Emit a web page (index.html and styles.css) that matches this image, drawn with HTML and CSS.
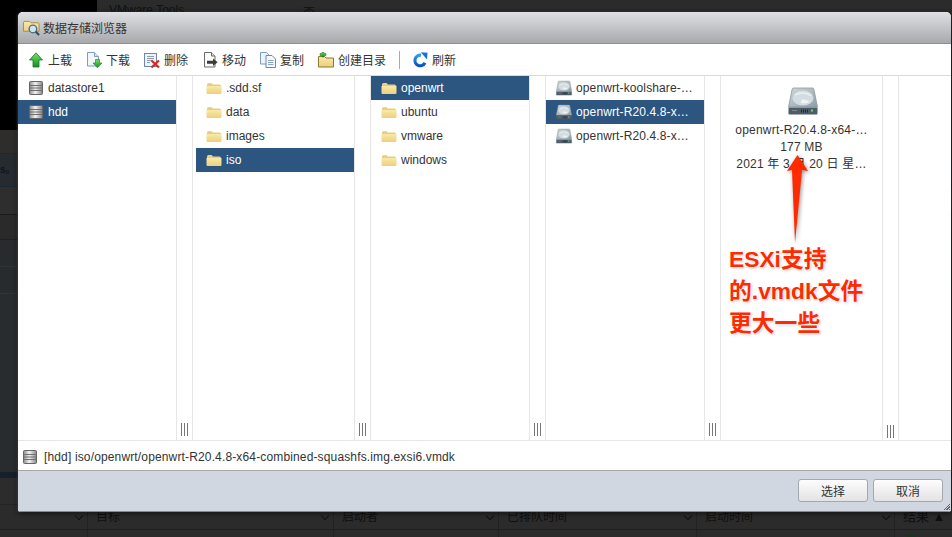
FILE: index.html
```html
<!DOCTYPE html>
<html lang="zh">
<head>
<meta charset="utf-8">
<title>数据存储浏览器</title>
<link rel="stylesheet" href="styles.css">
</head>
<body>
<svg class="defs" aria-hidden="true">
  <defs>
    <linearGradient id="gFolder" x1="0" y1="0" x2="0" y2="1"><stop offset="0" stop-color="#f9e9a8"/><stop offset="1" stop-color="#ecd07c"/></linearGradient>
    <linearGradient id="gFolderTab" x1="0" y1="0" x2="0" y2="1"><stop offset="0" stop-color="#ecd893"/><stop offset="1" stop-color="#dfc476"/></linearGradient>
    <linearGradient id="gDisk" x1="0" y1="0" x2="1" y2="1"><stop offset="0" stop-color="#cfd8dc"/><stop offset="1" stop-color="#8f9da6"/></linearGradient>
    <linearGradient id="gStore" x1="0" y1="0" x2="1" y2="0"><stop offset="0" stop-color="#8b8b8b"/><stop offset=".45" stop-color="#f2f2f2"/><stop offset="1" stop-color="#858585"/></linearGradient>
    <linearGradient id="gGreen" x1="0" y1="0" x2="0" y2="1"><stop offset="0" stop-color="#7ee05a"/><stop offset="1" stop-color="#0f8f2a"/></linearGradient>
    <linearGradient id="gBlue" x1="0" y1="0" x2="0" y2="1"><stop offset="0" stop-color="#2f9bf0"/><stop offset="1" stop-color="#0a55c0"/></linearGradient>
    <symbol id="i-store" viewBox="0 0 16 16">
      <rect x="1.5" y="1.5" width="13" height="13" rx="1" fill="url(#gStore)" stroke="#666"/>
      <path d="M2 5.5h12M2 8h12M2 10.500h12" stroke="#6f6f6f" stroke-width="1"/>
    </symbol>
    <symbol id="i-folder" viewBox="0 0 16 16">
      <path d="M1 4.500q0-1.500 1.500-1.500h3l1.500 1.500h6.500q1.500 0 1.500 1.500v1h-14z" fill="url(#gFolderTab)"/>
      <path d="M.5 6h15v7q0 1-1 1h-13q-1 0-1-1z" fill="url(#gFolder)"/>
    </symbol>
    <symbol id="i-disk" viewBox="0 0 30 28">
      <path d="M5.500 1h19q1 0 1.300 1l3.700 18H.5l3.700-18q.3-1 1.300-1z" fill="url(#gDisk)" stroke="#8a98a1" stroke-width=".8"/>
      <ellipse cx="15" cy="11" rx="10.500" ry="7.500" fill="#d3dce0"/>
      <path d="M7 8q8-4.500 16 .5" fill="none" stroke="#e9eff1" stroke-width="1.500"/>
      <path d="M14 12.500q7 .5 7.500 2.500-5 2.500-9 .5z" fill="#f1f4f6"/>
      <path d="M.5 20.500h29v6q0 1-1 1h-27q-1 0-1-1z" fill="#4d5c67"/>
      <path d="M13 22.500h1v3h-1zM15 22.500h1v3h-1zM17 22.500h1v3h-1zM19 22.500h1v3h-1z" fill="#1f2a31"/>
      <rect x="23" y="22.500" width="2" height="2" fill="#6fdc6f"/>
      <path d="M4 23.500h5" stroke="#7c8a94"/>
    </symbol>
    <symbol id="i-up" viewBox="0 0 16 16">
      <path d="M8 .8 14.500 8H11v7H5V8H1.500z" fill="url(#gGreen)" stroke="#15762c" stroke-width=".8"/>
    </symbol>
    <symbol id="i-down" viewBox="0 0 16 16">
      <path d="M1.500.5h7l4 4V14h-11z" fill="#f2f6fb" stroke="#7f9bbd"/>
      <path d="M8.500.5v4h4" fill="#d5e2f0" stroke="#7f9bbd"/>
      <path d="M9.500 7.500h4v3.500h2.500l-4.500 4.800-4.500-4.800h2.500z" fill="url(#gGreen)" stroke="#15762c" stroke-width=".6"/>
    </symbol>
    <symbol id="i-del" viewBox="0 0 16 16">
      <rect x=".5" y="1.500" width="12" height="13" fill="#eef3f9" stroke="#6d88ab"/>
      <path d="M3 4.500h7M3 6.500h7M3 8.500h5M3 10.500h3" stroke="#8a9cb4"/>
      <path d="M7.500 8.500l7.500 7M15 8.500l-7.500 7" stroke="#e0241c" stroke-width="2.200"/>
    </symbol>
    <symbol id="i-move" viewBox="0 0 16 16">
      <path d="M2.500.5h7l3.500 3.500v11h-10.500z" fill="#fafafa" stroke="#6a6a6a"/>
      <path d="M9.500.5v3.500h3.500" fill="#ddd" stroke="#6a6a6a"/>
      <path d="M5 8.800h6V6.500l4.600 3.800-4.600 3.800v-2.300H5z" fill="#3c3c3c"/>
    </symbol>
    <symbol id="i-copy" viewBox="0 0 16 16">
      <path d="M.5.500h6l2.500 2.500v9h-8.500z" fill="#eef4fb" stroke="#7f9bbd"/>
      <path d="M6 3.500h6l3.500 3.500v8.500H6z" fill="#f7fafd" stroke="#6d88ab"/>
      <path d="M8 8.500h5.500M8 10.500h5.500M8 12.500h5.500" stroke="#8aa3c2"/>
    </symbol>
    <symbol id="i-new" viewBox="0 0 16 16">
      <path d="M.5 4.500h6l1.500 1.500h7.500v9H.5z" fill="url(#gFolder)" stroke="#8d7733"/>
      <path d="M2 1.500h2V0h2v1.500h2v2H6V5H4V3.500H2z" fill="url(#gGreen)" stroke="#15762c" stroke-width=".5"/>
    </symbol>
    <symbol id="i-refresh" viewBox="0 0 16 16">
      <path d="M13 10.800A5.300 5.300 0 1 1 9 3.200" fill="none" stroke="url(#gBlue)" stroke-width="3.200"/>
      <path d="M8.800 .3 15.500 .8 15 7.500z" fill="#1272d8"/>
    </symbol>
    <symbol id="i-browse" viewBox="0 0 18 18">
      <path d="M.5 4q0-1.500 1.500-1.500h5l1.500 1.500h7q1.500 0 1.500 1.500V13H.5z" fill="url(#gFolder)" stroke="#a98a3e"/>
      <circle cx="10.500" cy="10.500" r="4" fill="#cfe3f2" stroke="#4f7183" stroke-width="1.500"/>
      <path d="M13.500 13.500l3.500 3.500" stroke="#2f4a5a" stroke-width="2.200"/>
    </symbol>
  </defs>
</svg>

<div class="backdrop">
  <div class="bg-top">
    <div class="bg-black"></div>
    <div class="bg-tools"><span class="bg-tools-name">VMware Tools</span><span class="bg-tools-val">否</span></div>
  </div>
  <div class="band band-a"></div>
  <div class="band band-b"><span class="band-text">s。</span></div>
  <div class="band band-c"></div>
  <div class="band band-d"></div>
  <div class="band band-e"></div>
  <div class="band band-e"></div>
  <div class="band band-f"></div>
  <div class="band band-g"></div>
  <div class="band band-h"></div>
  <div class="bg-grid bg-head">
    <div class="bg-cell"><i class="chev"></i></div>
    <div class="bg-cell">目标<i class="chev"></i></div>
    <div class="bg-cell">启动者<i class="chev"></i></div>
    <div class="bg-cell">已排队时间<i class="chev"></i></div>
    <div class="bg-cell">启动时间<i class="chev"></i></div>
    <div class="bg-cell bg-last">结果 ▲</div>
  </div>
  <div class="bg-grid bg-row">
    <div class="bg-cell"></div>
    <div class="bg-cell"></div>
    <div class="bg-cell"></div>
    <div class="bg-cell"></div>
    <div class="bg-cell"></div>
    <div class="bg-cell bg-last"><i class="status"></i></div>
  </div>
</div>

<section class="dialog">
  <header class="titlebar">
    <svg class="title-icon"><use href="#i-browse"/></svg>
    <span>数据存储浏览器</span>
  </header>
  <nav class="toolbar">
    <span class="tool"><svg class="ico"><use href="#i-up"/></svg>上载</span>
    <span class="tool"><svg class="ico"><use href="#i-down"/></svg>下载</span>
    <span class="tool"><svg class="ico"><use href="#i-del"/></svg>删除</span>
    <span class="tool"><svg class="ico"><use href="#i-move"/></svg>移动</span>
    <span class="tool"><svg class="ico"><use href="#i-copy"/></svg>复制</span>
    <span class="tool"><svg class="ico"><use href="#i-new"/></svg>创建目录</span>
    <span class="tool-sep"></span>
    <span class="tool"><svg class="ico"><use href="#i-refresh"/></svg>刷新</span>
  </nav>
  <div class="columns">
    <div class="col">
      <div class="row"><svg class="ico"><use href="#i-store"/></svg>datastore1</div>
      <div class="row selected"><svg class="ico"><use href="#i-store"/></svg>hdd</div>
    </div>
    <div class="handle"><span class="grip"></span></div>
    <div class="col col-wide col-inset">
      <div class="row"><svg class="ico"><use href="#i-folder"/></svg>.sdd.sf</div>
      <div class="row"><svg class="ico"><use href="#i-folder"/></svg>data</div>
      <div class="row"><svg class="ico"><use href="#i-folder"/></svg>images</div>
      <div class="row selected"><svg class="ico"><use href="#i-folder"/></svg>iso</div>
    </div>
    <div class="handle"><span class="grip"></span></div>
    <div class="col">
      <div class="row selected"><svg class="ico"><use href="#i-folder"/></svg>openwrt</div>
      <div class="row"><svg class="ico"><use href="#i-folder"/></svg>ubuntu</div>
      <div class="row"><svg class="ico"><use href="#i-folder"/></svg>vmware</div>
      <div class="row"><svg class="ico"><use href="#i-folder"/></svg>windows</div>
    </div>
    <div class="handle"><span class="grip"></span></div>
    <div class="col col-files">
      <div class="row"><svg class="ico"><use href="#i-disk"/></svg>openwrt-koolshare-…</div>
      <div class="row selected"><svg class="ico"><use href="#i-disk"/></svg>openwrt-R20.4.8-x…</div>
      <div class="row"><svg class="ico"><use href="#i-disk"/></svg>openwrt-R20.4.8-x…</div>
    </div>
    <div class="handle"><span class="grip"></span></div>
    <div class="col col-wide preview">
      <svg class="preview-icon"><use href="#i-disk"/></svg>
      <div>openwrt-R20.4.8-x64-…</div>
      <div>177 MB</div>
      <div>2021 年 3 月 20 日 星…</div>
    </div>
    <div class="handle"><span class="grip grip-low"></span></div>
    <div class="col col-rest"></div>
  </div>
  <div class="pathbar"><svg class="ico"><use href="#i-store"/></svg><span class="path-text">[hdd] iso/openwrt/openwrt-R20.4.8-x64-combined-squashfs.img.exsi6.vmdk</span></div>
  <footer class="footer">
    <button class="btn" type="button">选择</button>
    <button class="btn" type="button">取消</button>
    <span class="resize"></span>
  </footer>
</section>

<svg class="arrow" width="30" height="100" viewBox="0 0 30 100" aria-hidden="true">
  <polygon points="12.500,1 23,17 17,16 10,89 7,16 2,17"/>
</svg>
<div class="note">ESXi支持<br>的.vmdk文件<br>更大一些</div>
</body>
</html>
```
FILE: styles.css
```css
* { box-sizing: border-box; }
html, body { margin: 0; padding: 0; }
body {
  position: relative;
  width: 952px;
  height: 537px;
  overflow: hidden;
  background: #2b2b2b;
  font-family: "Liberation Sans", "Noto Sans CJK SC", sans-serif;
  font-size: 12px;
  color: #333;
}
.defs { position: absolute; width: 0; height: 0; }

/* dimmed page behind the dialog */
.backdrop { display: flex; flex-direction: column; height: 537px; overflow: hidden; }
.bg-top { display: flex; flex: none; height: 130px; }
.bg-black { width: 97px; background: #000; }
.bg-tools { flex: 1; background: #2b2b2b; color: #111; font-size: 12px; padding: 3px 0 0 12px; display: flex; }
.bg-tools-name { width: 194px; }
.band { flex: none; }
.band-a { height: 23px; background: #2e2d2c; }
.band-b { height: 34px; background: #262b30; border-top: 1px solid #1c2736; border-bottom: 1px solid #1c2736; color: #0c1622; font-weight: bold; line-height: 32px; font-size: 10px; }
.band-c { height: 28px; background: #2f2e2e; border-bottom: 1px solid #1a1a1a; }
.band-d { height: 25px; background: #2a2a2a; border-bottom: 1px solid #1f1f1f; }
.band-e { height: 27px; background: #272b2d; border-bottom: 1px solid #333; }
.band-f { height: 178px; background: #282c2e; }
.band-g { height: 6px; background: #16202c; }
.band-h { height: 27px; background: #2c2c2c; border-bottom: 1px solid #242424; }
.bg-grid { display: grid; grid-template-columns: 88px 246px 165px 198px 198px 1fr; flex: none; }
.bg-head { height: 25px; border-bottom: 1px solid #1f1f1f; color: #0f0f0f; line-height: 24px; }
.bg-row { height: 7px; }
.bg-cell { border-right: 1px solid #222; padding: 0 4px 0 8px; display: flex; justify-content: space-between; align-items: center; white-space: nowrap; overflow: hidden; }
.bg-last { border-right: 0; font-size: 13px; justify-content: flex-start; }
.chev { width: 6px; height: 6px; margin-right: 1px; margin-top: -3px; border-right: 1px solid #111; border-bottom: 1px solid #111; transform: rotate(45deg); flex: none; margin-left: auto; }
.status { width: 12px; height: 12px; margin: 5px 0 0 2px; border-radius: 50%; background: #0e3d14; flex: none; align-self: flex-start; }

/* dialog */
.dialog {
  position: absolute;
  left: 18px;
  top: 12px;
  width: 933px;
  height: 500px;
  display: flex;
  flex-direction: column;
  background: #fff;
  border-radius: 5px 5px 3px 3px;
  box-shadow: 0 1px 5px rgba(0, 0, 0, .75), -1px 0 2px rgba(120, 120, 120, .5);
  overflow: hidden;
}
.titlebar {
  flex: none;
  height: 32px;
  display: flex;
  align-items: center;
  padding-left: 5px;
  gap: 3px;
  background: linear-gradient(#dfe0e3, #a8a9ad);
  border-bottom: 1px solid #8f8f8f;
  color: #333;
}
.title-icon { width: 17px; height: 17px; }
.toolbar {
  flex: none;
  height: 32px;
  display: flex;
  align-items: center;
  padding-left: 10px;
  gap: 14px;
  border-bottom: 1px solid #d9d9d9;
}
.tool { display: flex; align-items: center; gap: 4px; }
.tool-sep { width: 1px; height: 18px; background: #aaa; margin: 0 -2px 0 -1px; }
.ico { width: 16px; height: 16px; flex: none; }

.columns { flex: none; height: 364px; display: flex; }
.col { flex: none; width: 158px; }
.col-wide { width: 161px; }
.col-inset { padding-left: 3px; }
.col-rest { flex: 1; }
.col-files .row { letter-spacing: .12px; }
.handle {
  flex: none;
  width: 17px;
  border-left: 1px solid #e6e6e6;
  border-right: 1px solid #e6e6e6;
  display: flex;
  justify-content: center;
  align-items: flex-end;
  padding-bottom: 4px;
}
.grip {
  width: 7px;
  height: 13px;
  border-left: 1px solid #777;
  border-right: 1px solid #777;
  background: linear-gradient(#777, #777) center / 1px 100% no-repeat;
}
.grip-low { margin-bottom: -2px; }
.row {
  height: 24px;
  display: flex;
  align-items: center;
  gap: 4px;
  padding-left: 10px;
  white-space: nowrap;
  color: #333;
}
.row.selected { background: #2c5580; color: #fff; }
.preview {
  display: flex;
  flex-direction: column;
  align-items: center;
  padding-top: 11px;
  line-height: 17px;
  white-space: nowrap;
  letter-spacing: .2px;
}
.preview-icon { width: 30px; height: 28px; margin: 0 0 7px 3px; flex: none; }

.pathbar {
  flex: none;
  height: 31px;
  display: flex;
  align-items: center;
  gap: 6px;
  padding: 2px 0 0 4px;
  border-top: 1px solid #e6e6e6;
  border-bottom: 1px solid #a6a6a6;
}
.path-text { letter-spacing: .145px; }
.footer {
  flex: 1;
  position: relative;
  display: flex;
  justify-content: flex-end;
  align-items: flex-start;
  gap: 5px;
  padding: 8px 8px 0 0;
  background: #d0d7e0;
  border-bottom: 1px solid #8a8a8a;
}
.btn {
  width: 70px;
  height: 23px;
  padding: 0;
  font: inherit;
  color: #333;
  background: linear-gradient(#fdfdfd, #e3e3e3);
  border: 1px solid #a5a8ad;
  border-radius: 3px;
}
.resize {
  position: absolute;
  right: 1px;
  bottom: 1px;
  width: 7px;
  height: 7px;
  background: repeating-linear-gradient(135deg, transparent 0 1px, #666 1px 2px);
  clip-path: polygon(100% 0, 100% 100%, 0 100%);
}

/* red annotation drawn over the screenshot */
.arrow {
  position: absolute;
  left: 785px;
  top: 154px;
  fill: #ff2a00;
  filter: drop-shadow(1px 1px 2px rgba(0, 0, 0, .45));
}
.note {
  position: absolute;
  left: 729px;
  top: 243px;
  font-size: 22.800px;
  line-height: 32px;
  font-weight: bold;
  color: #ff2a00;
  white-space: nowrap;
  text-shadow: 0 0 3px #fff, 0 0 3px #fff, 1px 1px 3px rgba(0, 0, 0, .3);
}
```
